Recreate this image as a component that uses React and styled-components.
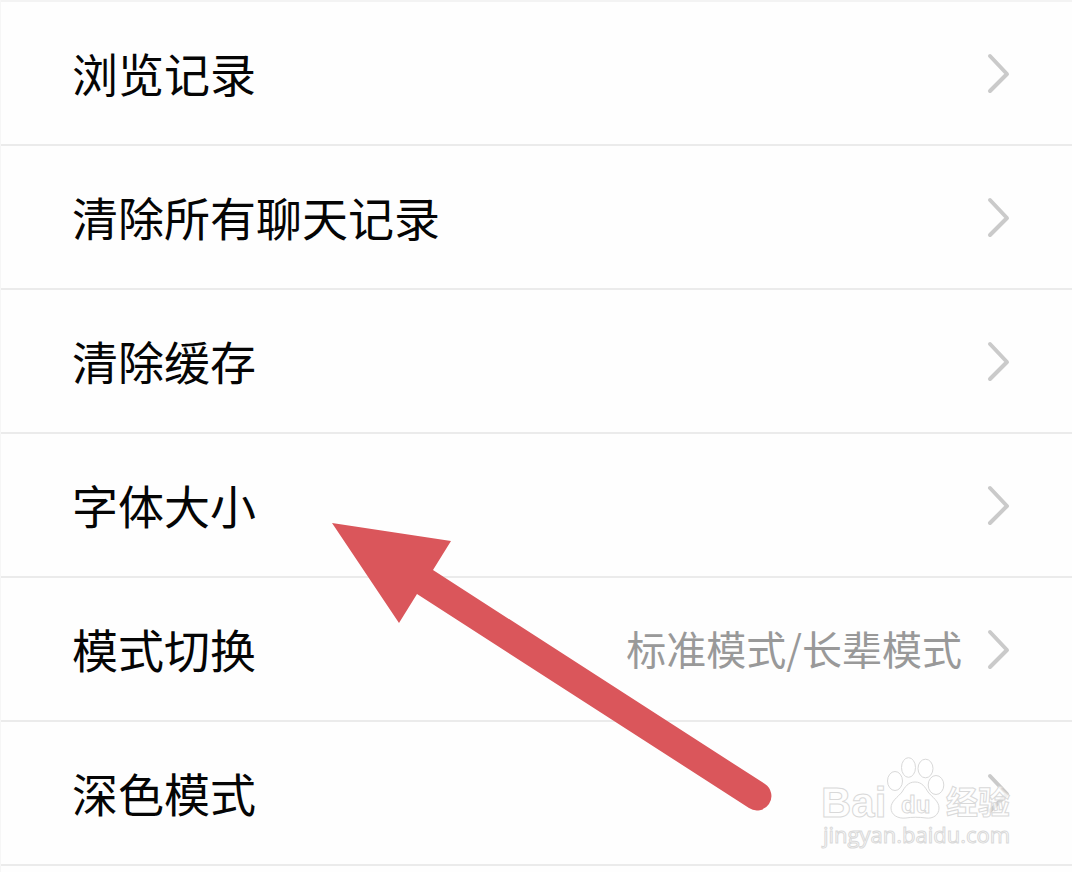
import React from "react";
import styled, { createGlobalStyle } from "styled-components";

const items = [
  { label: "浏览记录" },
  { label: "清除所有聊天记录" },
  { label: "清除缓存" },
  { label: "字体大小" },
  { label: "模式切换", value: "标准模式/长辈模式" },
  { label: "深色模式" },
];

function SettingRow({ label, value }) {
  return (
    <Row>
      <RowButton type="button">
        <Label>{label}</Label>
        {value && <Value>{value}</Value>}
        <Chevron viewBox="0 0 24 44" aria-hidden="true">
          <path d="M3 6 L20 24 L3 41" />
        </Chevron>
      </RowButton>
    </Row>
  );
}

function Pointer() {
  return (
    <Arrow viewBox="0 0 440 290" aria-hidden="true">
      <path d="M0 1 L119 19 L101 48 L433 262 A14 14 0 0 1 417 286 L85 72 L67 101 Z" />
    </Arrow>
  );
}

function Watermark() {
  return (
    <Mark viewBox="0 0 200 100" role="img" aria-label="Baidu 经验">
      <ellipse cx="75" cy="27" rx="7.5" ry="9.5" />
      <ellipse cx="88.5" cy="13.5" rx="7" ry="9.8" />
      <ellipse cx="105.5" cy="14.5" rx="7.5" ry="9.3" />
      <ellipse cx="116" cy="31" rx="7.8" ry="9.5" />
      <path d="M95 28 C102 28 105 33 108 38 C112 43 119 47 119 54 C119 61 113 65 106 64 C99 63 92 63 86 64 C78 65 71 61 71 54 C71 47 78 43 82 38 C85 33 88 28 95 28 Z" />
      <Brand x="1" y="63" $size={42}>Bai</Brand>
      <Brand x="81" y="59" $size={24}>du</Brand>
      <Brand x="126" y="60" $size={32}>经验</Brand>
      <Site x="3" y="89">jingyan.baidu.com</Site>
    </Mark>
  );
}

function App() {
  return (
    <>
      <GlobalStyle />
      <Page>
        <List>
          {items.map((item) => (
            <SettingRow key={item.label} {...item} />
          ))}
        </List>
        <Pointer />
        <Watermark />
      </Page>
    </>
  );
}

export default App;

const GlobalStyle = createGlobalStyle`
  * {
    box-sizing: border-box;
  }
  body {
    margin: 0;
    background-color: #fefefe;
    font-family: "Noto Sans", "Noto Sans CJK SC", sans-serif;
  }
`;

const Page = styled.main`
  position: relative;
  min-height: 100vh;
  overflow: hidden;
  border-left: 1px solid #f6f6f6;
`;

const List = styled.ul`
  list-style: none;
  margin: 0;
  padding: 0;
  border-top: 2px solid #f3f3f3;
`;

const Row = styled.li`
  border-bottom: 2px solid #ebebeb;
`;

const RowButton = styled.button`
  display: flex;
  align-items: center;
  width: 100%;
  height: 142px;
  padding: 0 61px 2px 71px;
  border: 0;
  background: none;
  font-family: "Noto Sans CJK SC", sans-serif;
  text-align: left;
  cursor: pointer;
`;

const Label = styled.span`
  flex: 1;
  color: #050505;
  font-size: 46px;
  line-height: 60px;
`;

const Value = styled.span`
  margin-right: 25px;
  color: #999;
  font-size: 40px;
  line-height: 60px;
  white-space: nowrap;
`;

const Chevron = styled.svg`
  flex: none;
  width: 24px;
  height: 44px;
  fill: none;
  stroke: #cacaca;
  stroke-width: 4;
  stroke-linecap: round;
  stroke-linejoin: round;
`;

const Arrow = styled.svg`
  position: absolute;
  top: 522px;
  left: 331px;
  width: 440px;
  height: 290px;
  fill: #da565b;
  pointer-events: none;
`;

const Mark = styled.svg`
  position: absolute;
  top: 754px;
  right: 52px;
  width: 200px;
  height: 100px;
  fill: rgba(255, 255, 255, 0.75);
  stroke: #d9d9d9;
  stroke-width: 1;
  pointer-events: none;
`;

const Brand = styled.text`
  font-family: "Liberation Sans", "Noto Sans CJK SC", sans-serif;
  font-size: ${(props) => props.$size}px;
  font-weight: 700;
`;

const Site = styled.text`
  font-family: "Open Sans", sans-serif;
  font-size: 22px;
`;
